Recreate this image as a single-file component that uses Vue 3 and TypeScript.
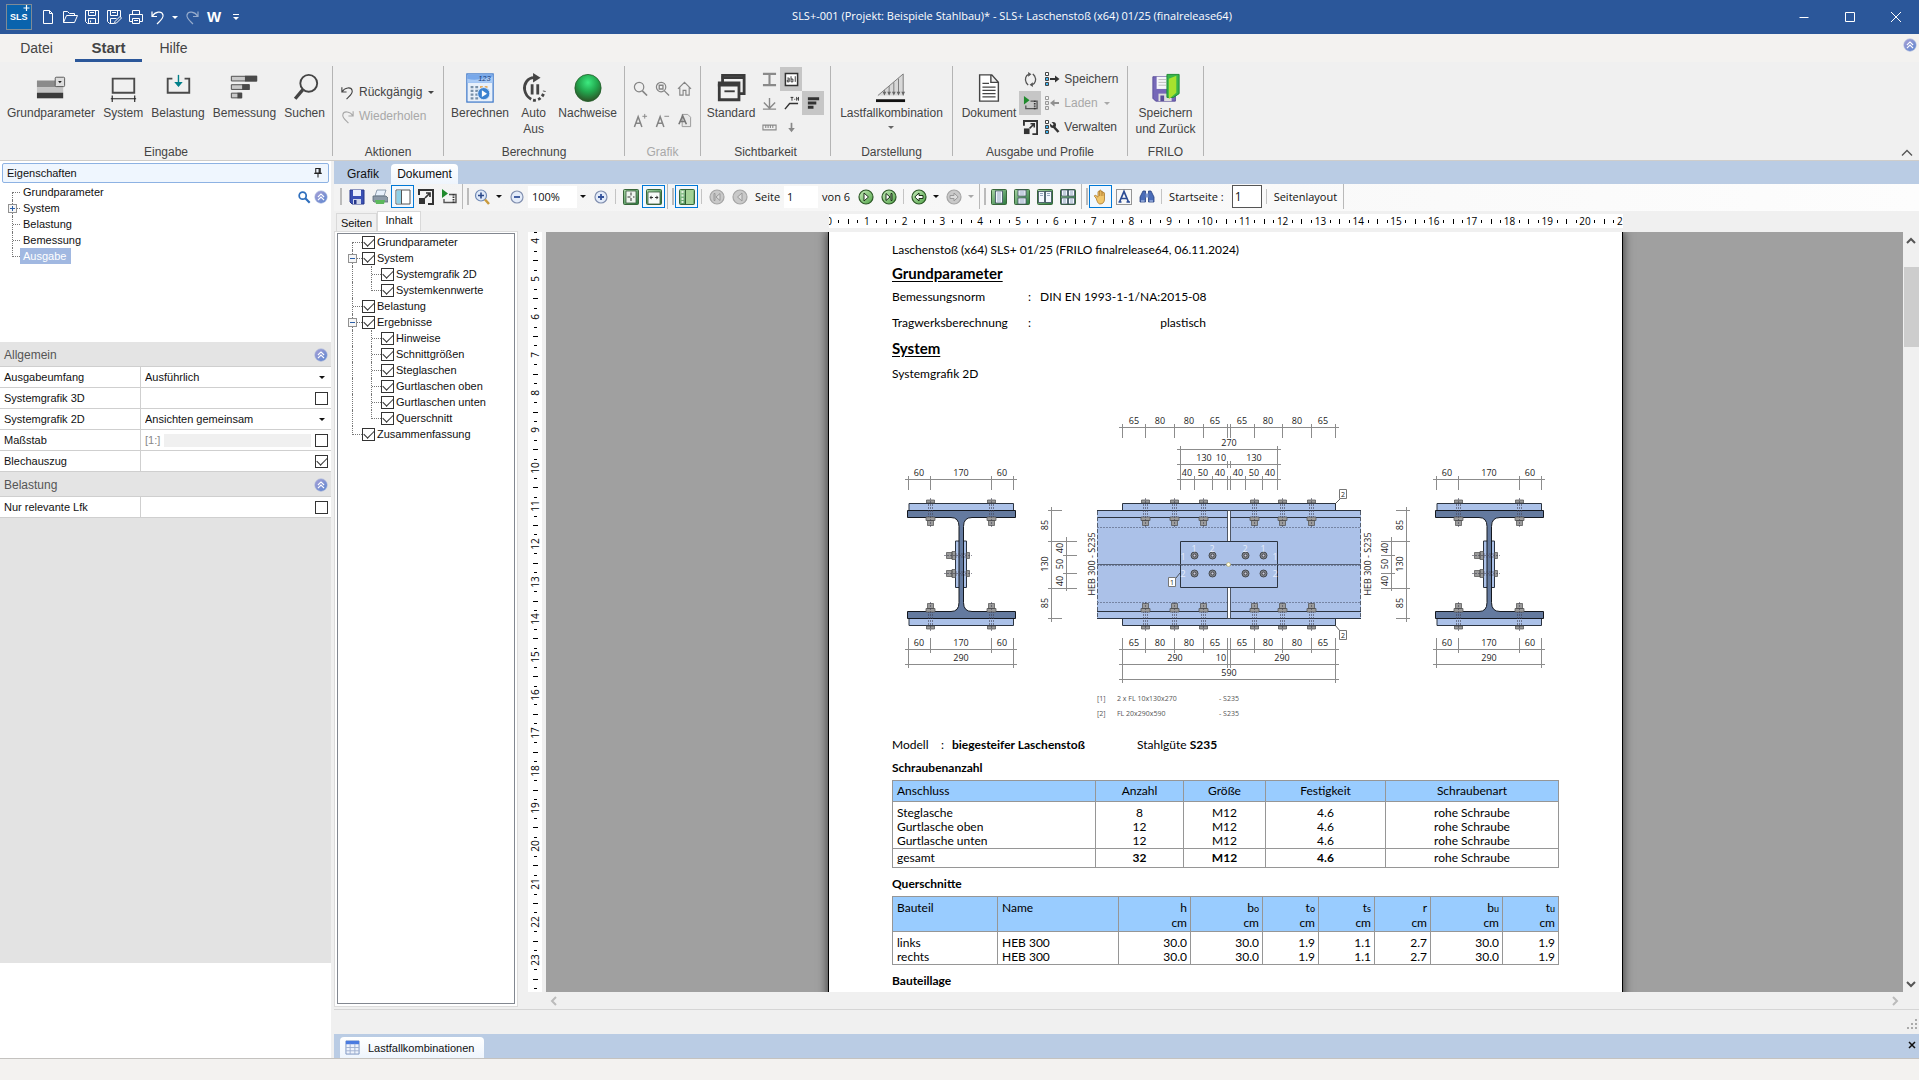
<script setup lang="ts">
import { ref } from 'vue'

interface TreeNode {
  label: string
  level: number
  last?: boolean
  expander?: boolean
  checked?: boolean
}

const chevrons =
  '<circle cx="8" cy="8" r="7" fill="url(#g-orb)" stroke="#8fa3d6" stroke-width=".7"/><path d="M4.5 8 8 4.5 11.5 8M4.5 11.5 8 8l3.5 3.5" fill="none" stroke="#fff" stroke-width="1.3"/>'
const full =
  '<path d="M1 6V1h14v14h-5" fill="none" stroke="#333" stroke-width="2"/><path d="M1 9h6v6H1z" fill="#333"/><path d="m7 9 5-5M8 4h4v4" fill="none" stroke="#333" stroke-width="1.7"/>'
const play =
  '<path d="M1 0v9l6-4.5z" fill="#1f8a2c"/><path d="M8 5.5h7v8H3V10" fill="none" stroke="#555" stroke-width="1.4"/><path d="M12.5 5v9" stroke="#333" stroke-width="1.8" stroke-dasharray="1.5 1"/>'
const undo = '<path d="M2 2.5v5h5M2.3 7.2C5 2.5 12 1.5 13 6c.8 3.2-2.5 5.5-6 9" fill="none" stroke="currentColor" stroke-width="1.2"/>'
const redo = '<path d="M14 2.5v5H9M13.7 7.2C11 2.5 4 1.5 3 6c-.8 3.2 2.5 5.5 6 9" fill="none" stroke="currentColor" stroke-width="1.2"/>'
const orb = (inner: string, grey = false): string =>
  `<circle cx="8" cy="8" r="7" fill="${grey ? '#c9c9c9' : 'url(#g-green)'}" stroke="${grey ? '#a5a5a5' : '#2e5a28'}" stroke-width="1.2"/><path d="${inner}" fill="${grey ? '#ddd' : '#fff'}" stroke="${grey ? '#999' : '#1c3018'}" stroke-width="1"/>`
const greenBox = (inner: string): string =>
  `<rect x=".5" y=".5" width="15" height="15" rx="1" fill="url(#g-box)" stroke="#38663a"/>${inner}`
const sheet = (x: number, y: number, w: number, h: number): string =>
  `<rect x="${x}" y="${y}" width="${w}" height="${h}" fill="#f4f8ff" stroke="#3d4f60" stroke-width=".8"/><path d="M${x + 1.5} ${y + 2}h${w - 3}M${x + 1.5} ${y + 4}h${w - 3}" stroke="#7d93b0" stroke-width=".8"/>`
const profile = '<path d="M1.5 1.5h3v3h-3z" fill="#fff" stroke="#444"/><path d="M1.5 6.5h3v3h-3zM1.5 11.5h3v3h-3z" fill="#3fb4f0" stroke="#444"/>'

const icons: Record<string, string> = {
  chevrons, full, play, undo, redo,
  fileNew: '<path d="M3.5 1.5h6l3 3v10h-9zM9.5 1.5v3h3" fill="none" stroke="#fff"/>',
  fileOpen: '<path d="M1.5 13.5v-11h4l2 2h5v2M1.5 13.5l3-7h11l-3 7z" fill="none" stroke="#fff"/>',
  fileSave: '<path d="M1.5 1.5h13v13h-11l-2-2zM4.5 1.5v5h7v-5M4.5 14.5v-5h7v5M6 3.5h4M6.5 11.5v2" fill="none" stroke="#fff"/>',
  fileSaveAs: '<path d="M8 14.5H3.5l-2-2v-11h13V8M4.5 1.5v5h7v-5M4.5 14.5v-5h6M6 3.5h4M8.5 14.5l.5-2 5-5 1.5 1.5-5 5z" fill="none" stroke="#fff"/>',
  filePrint: '<path d="M4.5 5.5v-4h7v4M4.5 12.5h-3v-7h13v7h-3M4.5 9.5h7v5h-7zM6 11.5h4" fill="none" stroke="#fff"/>',
  more: '<path d="M5 5.5h6" stroke="#fff"/><path d="m5 8 3 3 3-3z" fill="#fff"/>',
  params: '<path d="M1 8h28v7H1z" fill="#8b8b8b"/><path d="M1 15h28v6H1z" fill="#c4c4c4"/><path d="M1 21h28v6H1z" fill="#3b3b3b"/><rect x="20.5" y="4.5" width="10" height="10" rx="1" fill="#ddd" stroke="#555"/><path d="m23.5 8.5 2 2.5 2-2.5z" fill="#222"/>',
  system: '<path d="M5 6h23v15H5z" fill="none" stroke="#4a4a4a" stroke-width="2"/><path d="M3 27.5h27M4.5 24v7M28.5 24v7" stroke="#222" stroke-width="1.2"/>',
  load: '<path d="M10 6H5v15h23V6h-5" fill="none" stroke="#4a4a4a" stroke-width="2"/><path d="M16.5 2v12" stroke="#00808a" stroke-width="1.5"/><path d="M12 9.5h9l-4.5 5.5z" fill="#00808a"/>',
  design: '<path d="M2.5 3.5h27v5h-27zM2.5 12.5h19v5h-19zM2.5 21.5h11v5h-11z" fill="#c9c9c9" stroke="#4a4a4a"/><path d="M17 3h13v6H17zM14 12h8v6h-8zM9 21h5v6H9z" fill="#4a4a4a"/>',
  search: '<circle cx="20" cy="11" r="9" fill="none" stroke="#444" stroke-width="2"/><path d="m13.5 18-8 9.5" stroke="#444" stroke-width="3.5"/>',
  calc: '<rect x="2" y="1" width="28" height="30" fill="#e8f0fa" stroke="#3d78c9" stroke-width="1.3"/><path d="M2.5 1.5h27v9h-27z" fill="#78a8ea"/><path d="M2.5 6c10 3 18-1 27-2v6.5h-27z" fill="#a9caf5"/><text x="14" y="9" font-size="8" font-style="italic" font-family="Liberation Sans" fill="#163a78">123</text><path d="M6 15h3M11 15h3M6 19h3M11 19h3M6 23h3M11 23h3M6 27h3M11 27h3" stroke="#7890a8" stroke-width="2.5"/><path d="M16 15h3M21 15h3" stroke="#e5ad62" stroke-width="2.5"/><circle cx="20" cy="22" r="6.5" fill="#3b82d0" stroke="#d7e8fb"/><path d="M18 18.5v7l5.5-3.5z" fill="#fff"/>',
  auto: '<path d="M16 5C9 5 5 12 6 18s3.5 8 7 10" fill="none" stroke="#444" stroke-width="3"/><path d="M15 0v10l8-5z" fill="#444"/><path d="M14 12v11M20 12v11" stroke="#444" stroke-width="3"/><path d="M15 29c5 1 11-3 12-10" fill="none" stroke="#444" stroke-width="3" stroke-dasharray="3 2.5"/>',
  ball: '<ellipse cx="16" cy="16" rx="14" ry="14.5" fill="url(#g-ball)" stroke="#1c5a24" stroke-width=".8"/>',
  standard: '<path d="M7 10V2.5h23V22h-6" fill="none" stroke="#3b3b3b" stroke-width="3"/><path d="M3.5 10.5h21v18h-21z" fill="none" stroke="#3b3b3b" stroke-width="3"/><path d="M2 13h23M6 5h24" stroke="#3b3b3b" stroke-width="3"/><path d="M9 19.5h11" stroke="#3b3b3b" stroke-width="2"/>',
  lfk: '<path d="M2 24 29 1v23z" fill="#d8d8d8"/><path d="M2 24 29 1v23M24 6v16M19 10v12M14 14v9M9 18v5" fill="none" stroke="#777"/><path d="m22 20 2 4 2-4zM17 20l2 4 2-4zM12 20l2 4 2-4zM27 20l2 4 2-4zM7 20l2 4 2-4z" fill="#666"/><path d="M0 29.5h31" stroke="#111" stroke-width="3"/>',
  doc: '<path d="M6 2h13l7 8v20H6zM18 2v8h8" fill="#fff" stroke="#444" stroke-width="1.5"/><path d="M9 11h7M9 15h14M9 18.5h14M9 22h14M9 25.5h14" stroke="#444" stroke-width="1.2"/>',
  saveBack: '<path d="M2 4h24v26H5l-3-3z" fill="#7668b8" stroke="#5a4e99"/><path d="M6 4h12v13H6z" fill="#f5f5fa"/><path d="M8 7h8M8 10h8M8 13h8" stroke="#bbb"/><path d="M8 22h14v8H8z" fill="#ddd"/><path d="M10 24h4v6h-4z" fill="#5a4e99"/><path d="M17 1.5h13V22l-6 4h-7z" fill="#39b54a" stroke="#1d8a31"/><path d="m19 6 8-3v18l-8 7z" fill="#a6e22e"/>',
  gZoom: '<circle cx="6.5" cy="6.5" r="5" fill="none" stroke="#858585" stroke-width="1.3"/><path d="m10 10.5 5 5" stroke="#858585" stroke-width="1.7"/>',
  gFit: '<circle cx="6.5" cy="6.5" r="5" fill="none" stroke="#858585" stroke-width="1.3"/><path d="M4.5 4.5h4v4h-4zM10 10.5l5 5" fill="none" stroke="#858585" stroke-width="1.4"/>',
  gHome: '<path d="m1 8.5 7-7 7 7M3 7v8h3.5v-5h3v5H13V7" fill="none" stroke="#858585" stroke-width="1.2"/>',
  gPlus: '<path d="m1.5 15 4-11 4 11M3 11h5" fill="none" stroke="#858585" stroke-width="1.6"/><path d="M10 3.5h5M12.5 1v5" stroke="#858585"/>',
  gMinus: '<path d="m1.5 15 4-11 4 11M3 11h5" fill="none" stroke="#858585" stroke-width="1.6"/><path d="M10 3.5h5" stroke="#858585"/>',
  gPage: '<path d="M5.5 1.5h6l3 3v10h-9z" fill="#e8e8e8" stroke="#999"/><path d="m2 12 4-9 4 9M3.5 9h5" fill="none" stroke="#777" stroke-width="1.7"/>',
  beam: '<path d="M1 2h14M1 14h14M8 2v12" stroke="#8a8a8a" stroke-width="2.2"/>',
  abl: '<path d="M1.5 1.5h13v13h-13z" fill="#fff" stroke="#333" stroke-width="1.6"/><path d="M3.5 6.5h2v4h-2v-2h2M7.5 4.5v6h2v-3h-2M12 4.5v6" fill="none" stroke="#333"/>',
  axes: '<path d="M1 14h14M8 2v11M8 13 2 7M8 13l6-6" fill="none" stroke="#888" stroke-width="1.5"/>',
  label: '<path d="m1 14 5-6h9" fill="none" stroke="#333" stroke-width="1.5"/><path d="M7 1.5h3M8.5 1v4M11 3.5h1M13.500 1v4M15.5 1v4M13.5 3h2" stroke="#333" fill="none"/>',
  bars: '<path d="M2 3h12M2 7.5h9M2 12h6" stroke="#333" stroke-width="3.2"/>',
  scale: '<path d="M1 5.5h14v5H1zM4 5.5v3M6.5 5.5v3M9 5.5v3M11.5 5.5v3" fill="none" stroke="#8a8a8a" stroke-width="1.2"/>',
  down: '<path d="M8 3v8" stroke="#888" stroke-width="1.8"/><path d="M4.5 8.5h7L8 13z" fill="#888"/>',
  refresh: '<path d="M6 2.5C3 3.5 1.5 8 3.5 11.5l2 2.5M10 13.5c3-1 4.5-5.5 2.5-9l-2-2.5" fill="none" stroke="#555" stroke-width="1.4"/><path d="M5.5 0v5L9 2.5zM10.5 11v5L7 13.5z" fill="#555"/>',
  pSave: profile + '<path d="M6 8h6" stroke="#333" stroke-width="2"/><path d="M11 4.5v7L15.5 8z" fill="#333"/>',
  pLoad: '<g opacity=".5">' + profile.replace(/#3fb4f0/g, '#ddd') + '<path d="M9 8h6" stroke="#333" stroke-width="2"/><path d="M10.5 4.5v7L6 8z" fill="#333"/></g>',
  pTool: profile + '<path d="m9 7 5.5 6" stroke="#333" stroke-width="2.5"/><circle cx="9" cy="6" r="3" fill="#333"/><path d="m6 3 3 3" stroke="#f0f0f0" stroke-width="1.8"/>',
  tSave: '<path d="M1 1h14v14H3l-2-2z" fill="#3a50b4" stroke="#27378a"/><path d="M4 1h8v6H4z" fill="#e9eefc"/><path d="M4 10h8v5H4z" fill="#cfd6ea"/><path d="M5 11h2.5v4H5z" fill="#27378a"/>',
  tPrint: '<path d="M5 1h9l-2 6H3z" fill="#e7f0fb" stroke="#7a8a9c" stroke-width=".8"/><path d="M1 7h13l2 2v4H2l-1-1z" fill="#8d9aa8" stroke="#5c6976" stroke-width=".8"/><path d="M3 11h10l-1 4H4z" fill="#5cb85c"/>',
  tPanel: '<path d="M1 1h14v14H1z" fill="#fff" stroke="#555"/><path d="M1.5 1.5h5v13h-5z" fill="#8fd0e6"/><path d="M6.5 1v14" stroke="#555"/>',
  tZoomIn: '<circle cx="7" cy="6.5" r="5.5" fill="#dfe9f8" stroke="#6f89b5" stroke-width="1.2"/><path d="M4 6.5h6M7 3.5v6" stroke="#2c4a8a" stroke-width="1.6"/><path d="m11 10.5 4 4.5" stroke="#c99a3c" stroke-width="2.5"/>',
  tMinus: '<circle cx="8" cy="8" r="6" fill="#e3ebf9" stroke="#8290b0" stroke-width="1.2"/><path d="M5 8h6" stroke="#33529a" stroke-width="1.8"/>',
  tPlus: '<circle cx="8" cy="8" r="6" fill="#e3ebf9" stroke="#8290b0" stroke-width="1.2"/><path d="M5 8h6M8 5v6" stroke="#33529a" stroke-width="1.8"/>',
  tFit: greenBox('<path d="M3 2h10v12H3z" fill="#eef5ee" stroke="#3d5c3f" stroke-width=".8"/><path d="M8 3.500v9M4.500 8h7" stroke="#333" stroke-dasharray="3 2.500"/>'),
  tWidth: greenBox('<path d="M2 3h12v12H2z" fill="#f8faf8" stroke="#3d5c3f" stroke-width=".8"/><path d="M4 8.500h3M9 8.500h3" stroke="#333"/><path d="M5.500 6.500v4l-2-2zM10.500 6.500v4l2-2z" fill="#333"/>'),
  tThumbs: greenBox('<path d="M7 1v14h7.5V1z" fill="#a4d296"/><path d="M6.5 1v14" stroke="#2f5a31"/><path d="M2.5 3h2M2.5 6.5h2M2.5 10h2M2.5 13h2" stroke="#dff0da" stroke-width="1.8"/>'),
  first: orb('M11 4.5v7L7 8zM5 4.5h1v7H5z', true),
  prev: orb('M10 4v8L5.5 8z', true),
  next: orb('M6 4v8l4.5-4z'),
  last: orb('M5 4.5v7L9 8zM10 4.5h1v7h-1z'),
  back: orb('M8 4v2.5h4v3H8V12L3.8 8z'),
  fwd: orb('M8 4v2.5H4v3h4V12l4.200-4z', true),
  v1: greenBox(sheet(4.5, 2, 7, 12) + '<path d="M6 8h4M6 10h4M6 12h4" stroke="#7d93b0" stroke-width=".8"/>'),
  v2: greenBox(sheet(4, 1, 8, 6) + sheet(4, 9, 8, 6)),
  v3: greenBox(sheet(1.5, 2.5, 6, 11) + sheet(8.5, 2.5, 6, 11)),
  v4: greenBox(sheet(1.5, 1, 6, 6) + sheet(8.5, 1, 6, 6) + sheet(1.5, 9, 6, 6) + sheet(8.5, 9, 6, 6)),
  hand: '<path d="M3 9 1.5 7.5C1 6.5 2 6 3 6.5l2 1.7V3c0-1 1.5-1 1.5 0V1.800c0-1 1.7-1 1.7 0V3c0-1 1.6-1 1.6 0v1.2c0-1 1.7-1 1.7 0V10c0 3-1.5 5-4.5 5C5 15 4 12 3 9z" fill="#f1c66b" stroke="#a9762a" stroke-width=".8"/><path d="M6.5 3v4M8.2 3v4M9.9 3.5V7" stroke="#a9762a" stroke-width=".7"/>',
  textSel: '<path d="M.5.5h15v15H.5z" fill="none" stroke="#333" stroke-dasharray="1 1"/><path d="M3.5 13 8 2.5 12.5 13M5 9.5h6M2.5 13h3M10.5 13H14" fill="none" stroke="#2b4b94" stroke-width="1.7"/>',
  find: '<path d="M1 13V8l3-6h2.5v11zM9.5 13V2H12l3 6v5z" fill="#4a6cb8" stroke="#27407e" stroke-width=".8"/><path d="M6.5 4.5h3v4h-3z" fill="#7f9ad4"/><path d="M2 12h3.5M10.5 12H14" stroke="#c5d3f2"/>',
  pin: '<path d="M5 2h6v6H5zM9.5 2v6M3 8.5h10M8 8.5V14" fill="none" stroke="#222" stroke-width="1.4"/>',
  find2: '<circle cx="6.5" cy="6.5" r="4" fill="none" stroke="#2f6fbd" stroke-width="2"/><path d="m9.5 9.5 5 5" stroke="#2f6fbd" stroke-width="2.5"/>',
  grid: '<path d="M1 1h14v14H1z" fill="#eef3fc" stroke="#7a92c0"/><path d="M1 1h14v3.5H1z" fill="#4a7be0"/><path d="M1 8h14M1 11.5h14M5.5 4v11M10.5 4v11" stroke="#9fb0d0"/>',
}

const quick = ['fileNew', 'fileOpen', 'fileSave', 'fileSaveAs', 'filePrint']
const eingabe = [
  { icon: 'params', label: 'Grundparameter' },
  { icon: 'system', label: 'System' },
  { icon: 'load', label: 'Belastung' },
  { icon: 'design', label: 'Bemessung' },
  { icon: 'search', label: 'Suchen' },
]
const berechnung = [
  { icon: 'calc', label: 'Berechnen' },
  { icon: 'auto', label: 'Auto Aus' },
  { icon: 'ball', label: 'Nachweise' },
]
const grafik = ['gZoom', 'gFit', 'gHome', 'gPlus', 'gMinus', 'gPage']
const visibility = [
  { icon: 'beam' }, { icon: 'abl', on: true }, { icon: '' },
  { icon: 'axes' }, { icon: 'label' }, { icon: 'bars', on: true },
  { icon: 'scale' }, { icon: 'down' },
]
const output = [{ icon: 'refresh' }, { icon: 'play', on: true }, { icon: 'full' }]

const nav: TreeNode[] = [
  { label: 'Grundparameter', level: 0 },
  { label: 'System', level: 0, expander: true },
  { label: 'Belastung', level: 0 },
  { label: 'Bemessung', level: 0 },
  { label: 'Ausgabe', level: 0, last: true },
]
const selected = ref('Ausgabe')

const contents = ref<TreeNode[]>([
  { label: 'Grundparameter', level: 0, checked: true },
  { label: 'System', level: 0, expander: true, checked: true },
  { label: 'Systemgrafik 2D', level: 1, checked: true },
  { label: 'Systemkennwerte', level: 1, last: true, checked: true },
  { label: 'Belastung', level: 0, checked: true },
  { label: 'Ergebnisse', level: 0, expander: true, checked: true },
  { label: 'Hinweise', level: 1, checked: true },
  { label: 'Schnittgrößen', level: 1, checked: true },
  { label: 'Steglaschen', level: 1, checked: true },
  { label: 'Gurtlaschen oben', level: 1, checked: true },
  { label: 'Gurtlaschen unten', level: 1, checked: true },
  { label: 'Querschnitt', level: 1, last: true, checked: true },
  { label: 'Zusammenfassung', level: 0, last: true, checked: true },
])

const zoom = ref('100%')
const page = ref('1')
const startPage = ref('1')

/* Rulers: pixels per centimetre, one mark each quarter */
const CM = 37.8
const hTicks = Array.from({ length: 85 }, (_, i) => i)
const vTicks = Array.from({ length: 81 }, (_, i) => i)

const screws = [
  ['Steglasche', '8', 'M12', '4.6', 'rohe Schraube'],
  ['Gurtlasche oben', '12', 'M12', '4.6', 'rohe Schraube'],
  ['Gurtlasche unten', '12', 'M12', '4.6', 'rohe Schraube'],
]
const sectionHead = [
  ['h', ''], ['b', 'o'], ['t', 'o'], ['t', 's'], ['r', ''], ['b', 'u'], ['t', 'u'],
]
const sectionRows = [
  ['links', 'HEB 300', '30.0', '30.0', '1.9', '1.1', '2.7', '30.0', '1.9'],
  ['rechts', 'HEB 300', '30.0', '30.0', '1.9', '1.1', '2.7', '30.0', '1.9'],
]

/* Drawing: bolt axes and dimension chains */
const boltX = [1145, 1174, 1203, 1254, 1282, 1311]
const chainX = [1122, 1145, 1174, 1203, 1227, 1230, 1254, 1282, 1311, 1335]
const chainText = [
  [1134, '65'], [1160, '80'], [1189, '80'], [1215, '65'],
  [1242, '65'], [1268, '80'], [1297, '80'], [1323, '65'],
] as [number, string][]
const innerX = [1194, 1212, 1227, 1230, 1245, 1262]
const innerText = [
  [1187, '40'], [1203, '50'], [1220, '40'], [1238, '40'], [1254, '50'], [1270, '40'],
] as [number, string][]
const webBolts = [1194, 1212, 1245, 1263]
const webMarks = [
  [1194, 552, '1'], [1212, 552, '2'], [1245, 552, '2'], [1263, 552, '1'],
  [1183, 560, '1'], [1183, 577, '2'], [1275, 560, '1'], [1275, 577, '2'],
] as [number, number, string][]
</script>

<template>
  <div class="app">
    <svg class="defs" aria-hidden="true">
      <defs>
        <radialGradient id="g-ball" cx=".5" cy=".3" r=".7"><stop offset="0" stop-color="#3dea80" /><stop offset=".5" stop-color="#22a84e" /><stop offset="1" stop-color="#2c5226" /></radialGradient>
        <linearGradient id="g-orb" x2="1" y2="1"><stop offset="0" stop-color="#a9a0d6" /><stop offset="1" stop-color="#5b86d0" /></linearGradient>
        <linearGradient id="g-green" x2="1" y2="1"><stop offset="0" stop-color="#c9ecbc" /><stop offset="1" stop-color="#4fa346" /></linearGradient>
        <linearGradient id="g-box" x2="1" y2="1"><stop offset="0" stop-color="#a9d5a3" /><stop offset="1" stop-color="#2a7a3e" /></linearGradient>
      </defs>
    </svg>

    <header class="title">
      <svg class="logo" viewBox="0 0 26 26" aria-hidden="true">
        <rect x=".5" y=".5" width="25" height="25" fill="#0a63ad" stroke="#7f8b96" />
        <text x="4" y="16">SLS</text>
        <path d="M17.500 4h6M20.500 1v6" stroke="#fff" stroke-width="1.200" />
      </svg>
      <button v-for="q in quick" :key="q" class="q" :aria-label="q"><svg viewBox="0 0 16 16" v-html="icons[q]" /></button>
      <button class="q" aria-label="Rückgängig"><svg viewBox="0 0 16 16" v-html="icons.undo" /></button>
      <button class="q slim" aria-label="Liste"><i class="tri" /></button>
      <button class="q dim" aria-label="Wiederholen"><svg viewBox="0 0 16 16" v-html="icons.redo" /></button>
      <button class="q word">W</button>
      <button class="q" aria-label="Anpassen"><svg viewBox="0 0 16 16" v-html="icons.more" /></button>
      <h1>SLS+-001 (Projekt: Beispiele Stahlbau)* - SLS+ Laschenstoß (x64) 01/25 (finalrelease64)</h1>
      <div class="win">
        <button aria-label="Minimieren"><svg viewBox="0 0 12 12"><path d="M1.500 6.500h9" stroke="#fff" /></svg></button>
        <button aria-label="Maximieren"><svg viewBox="0 0 12 12"><path d="M1.500 1.500h9v9h-9z" fill="none" stroke="#fff" /></svg></button>
        <button aria-label="Schließen"><svg viewBox="0 0 12 12"><path d="m1 1 10 10M11 1 1 11" stroke="#fff" /></svg></button>
      </div>
    </header>

    <nav class="tabs">
      <button>Datei</button>
      <button class="active">Start</button>
      <button>Hilfe</button>
      <button class="help" aria-label="Hochklappen"><svg viewBox="0 0 16 16" v-html="icons.chevrons" /></button>
    </nav>

    <section class="ribbon">
      <div class="group g1">
        <div class="body">
          <button v-for="b in eingabe" :key="b.label" class="big"><svg viewBox="0 0 32 32" v-html="icons[b.icon]" /><span>{{ b.label }}</span></button>
        </div>
        <h2>Eingabe</h2>
      </div>
      <div class="group g2">
        <div class="body stack">
          <button class="row"><svg viewBox="0 0 16 16" v-html="icons.undo" />Rückgängig<i class="tri" /></button>
          <button class="row dis"><svg viewBox="0 0 16 16" v-html="icons.redo" />Wiederholen</button>
        </div>
        <h2>Aktionen</h2>
      </div>
      <div class="group g3">
        <div class="body">
          <button v-for="b in berechnung" :key="b.label" class="big" :class="b.icon"><svg viewBox="0 0 32 32" v-html="icons[b.icon]" /><span>{{ b.label }}</span></button>
        </div>
        <h2>Berechnung</h2>
      </div>
      <div class="group g4">
        <div class="body six">
          <button v-for="g in grafik" :key="g" :aria-label="g"><svg viewBox="0 0 16 16" v-html="icons[g]" /></button>
        </div>
        <h2 class="dis">Grafik</h2>
      </div>
      <div class="group g5">
        <div class="body">
          <button class="big"><svg viewBox="0 0 32 32" v-html="icons.standard" /><span>Standard</span></button>
          <div class="small three">
            <button v-for="(s, i) in visibility" :key="i" :class="{ on: s.on }" :aria-label="s.icon"><svg v-if="s.icon" viewBox="0 0 16 16" v-html="icons[s.icon]" /></button>
          </div>
        </div>
        <h2>Sichtbarkeit</h2>
      </div>
      <div class="group g6">
        <div class="body">
          <button class="big"><svg viewBox="0 0 32 32" v-html="icons.lfk" /><span>Lastfallkombination</span><i class="tri" /></button>
        </div>
        <h2>Darstellung</h2>
      </div>
      <div class="group g7">
        <div class="body">
          <button class="big"><svg viewBox="0 0 32 32" v-html="icons.doc" /><span>Dokument</span></button>
          <div class="small">
            <button v-for="s in output" :key="s.icon" :class="{ on: s.on }" :aria-label="s.icon"><svg viewBox="0 0 16 16" v-html="icons[s.icon]" /></button>
          </div>
          <div class="small rows">
            <button class="row"><svg viewBox="0 0 16 16" v-html="icons.pSave" />Speichern</button>
            <button class="row dis"><svg viewBox="0 0 16 16" v-html="icons.pLoad" />Laden<i class="tri" /></button>
            <button class="row"><svg viewBox="0 0 16 16" v-html="icons.pTool" />Verwalten</button>
          </div>
        </div>
        <h2>Ausgabe und Profile</h2>
      </div>
      <div class="group g8">
        <div class="body">
          <button class="big back"><svg viewBox="0 0 32 32" v-html="icons.saveBack" /><span>Speichern<br />und Zurück</span></button>
        </div>
        <h2>FRILO</h2>
      </div>
      <button class="fold" aria-label="Menüband einklappen"><svg viewBox="0 0 12 8"><path d="m1 6.500 5-5 5 5" fill="none" stroke="#555" stroke-width="1.300" /></svg></button>
    </section>

    <main>
      <aside class="props">
        <h2 class="caption">Eigenschaften<svg viewBox="0 0 16 16" v-html="icons.pin" /></h2>
        <div class="nav">
          <ul class="tree">
            <li v-for="(n, i) in nav" :key="n.label">
              <span class="stem" :class="{ first: i === 0, last: n.last }" />
              <button v-if="n.expander" class="exp plus" aria-label="Aufklappen" />
              <button class="node" :class="{ sel: selected === n.label }" @click="selected = n.label">{{ n.label }}</button>
            </li>
          </ul>
          <div class="tools">
            <button aria-label="Suchen"><svg viewBox="0 0 16 16" v-html="icons.find2" /></button>
            <button aria-label="Einklappen"><svg viewBox="0 0 16 16" v-html="icons.chevrons" /></button>
          </div>
        </div>
        <h3>Allgemein<svg viewBox="0 0 16 16" v-html="icons.chevrons" /></h3>
        <div class="prop"><label for="p1">Ausgabeumfang</label><div><select id="p1"><option>Ausführlich</option></select><i class="tri" /></div></div>
        <div class="prop"><label for="p2">Systemgrafik 3D</label><div><input id="p2" type="checkbox" /></div></div>
        <div class="prop"><label for="p3">Systemgrafik 2D</label><div><select id="p3"><option>Ansichten gemeinsam</option></select><i class="tri" /></div></div>
        <div class="prop"><label for="p4">Maßstab</label><div><span class="ratio">[1:]</span><span class="blank" /><input id="p4" type="checkbox" /></div></div>
        <div class="prop"><label for="p5">Blechauszug</label><div><input id="p5" type="checkbox" checked /></div></div>
        <h3>Belastung<svg viewBox="0 0 16 16" v-html="icons.chevrons" /></h3>
        <div class="prop"><label for="p6">Nur relevante Lfk</label><div><input id="p6" type="checkbox" /></div></div>
        <div class="fill" />
        <div class="hint" />
      </aside>

      <section class="work">
        <div class="strip">
          <button>Grafik</button>
          <button class="active">Dokument</button>
        </div>

        <div class="toolbar">
          <div class="tb t1">
            <button aria-label="Speichern"><svg viewBox="0 0 16 16" v-html="icons.tSave" /></button>
            <button aria-label="Drucken"><svg viewBox="0 0 16 16" v-html="icons.tPrint" /></button>
            <button class="on" aria-label="Seitenleiste"><svg viewBox="0 0 16 16" v-html="icons.tPanel" /></button>
            <button aria-label="Vollbild"><svg viewBox="0 0 16 16" v-html="icons.full" /></button>
            <button aria-label="Wiedergabe"><svg viewBox="0 0 16 16" v-html="icons.play" /></button>
          </div>
          <div class="tb">
            <button aria-label="Vergrößern"><svg viewBox="0 0 16 16" v-html="icons.tZoomIn" /></button>
            <button class="arrow" aria-label="Zoomliste"><i class="tri" /></button>
            <button aria-label="Verkleinern"><svg viewBox="0 0 16 16" v-html="icons.tMinus" /></button>
            <input v-model="zoom" class="zoom" aria-label="Zoom" />
            <button class="arrow" aria-label="Zoomstufe"><i class="tri" /></button>
            <button aria-label="Größer"><svg viewBox="0 0 16 16" v-html="icons.tPlus" /></button>
            <i class="sep" />
            <button aria-label="Ganze Seite"><svg viewBox="0 0 16 16" v-html="icons.tFit" /></button>
            <button class="on" aria-label="Seitenbreite"><svg viewBox="0 0 16 16" v-html="icons.tWidth" /></button>
          </div>
          <div class="tb">
            <button class="on" aria-label="Miniaturen"><svg viewBox="0 0 16 16" v-html="icons.tThumbs" /></button>
            <i class="sep" />
            <button aria-label="Erste"><svg viewBox="0 0 16 16" v-html="icons.first" /></button>
            <button aria-label="Vorige"><svg viewBox="0 0 16 16" v-html="icons.prev" /></button>
            <label for="page" class="txt">Seite</label>
            <input id="page" v-model="page" class="page-no" />
            <span class="txt">von 6</span>
            <button aria-label="Nächste"><svg viewBox="0 0 16 16" v-html="icons.next" /></button>
            <button aria-label="Letzte"><svg viewBox="0 0 16 16" v-html="icons.last" /></button>
            <i class="sep" />
            <button aria-label="Zurück"><svg viewBox="0 0 16 16" v-html="icons.back" /></button>
            <button class="arrow" aria-label="Verlauf"><i class="tri" /></button>
            <button aria-label="Vor"><svg viewBox="0 0 16 16" v-html="icons.fwd" /></button>
            <button class="arrow dis" aria-label="Verlauf vor"><i class="tri" /></button>
          </div>
          <div class="tb">
            <button v-for="v in ['v1', 'v2', 'v3', 'v4']" :key="v" :aria-label="v"><svg viewBox="0 0 16 16" v-html="icons[v]" /></button>
          </div>
          <div class="tb">
            <button class="on" aria-label="Hand"><svg viewBox="0 0 16 16" v-html="icons.hand" /></button>
            <button aria-label="Textauswahl"><svg viewBox="0 0 16 16" v-html="icons.textSel" /></button>
            <button aria-label="Suchen"><svg viewBox="0 0 16 16" v-html="icons.find" /></button>
            <i class="sep" />
            <label for="start" class="txt">Startseite :</label>
            <input id="start" v-model="startPage" class="start-no" />
            <i class="sep" />
            <button class="txt">Seitenlayout</button>
          </div>
        </div>

        <div class="content">
          <aside class="outline">
            <div class="otabs"><button>Seiten</button><button class="active">Inhalt</button></div>
            <div class="opage">
              <ul class="tree">
                <li v-for="(n, i) in contents" :key="n.label">
                  <span v-if="n.level" class="stem guide" />
                  <span class="stem" :class="{ first: i === 0, last: n.last }" />
                  <button v-if="n.expander" class="exp" aria-label="Zuklappen" />
                  <label><input v-model="n.checked" type="checkbox" />{{ n.label }}</label>
                </li>
              </ul>
            </div>
          </aside>

          <div class="viewer">
            <svg class="hruler" width="794" height="14">
              <template v-for="i in hTicks" :key="i">
                <text v-if="i % 4 === 0" :x="(i * CM) / 4" y="11">{{ i / 4 }}</text>
                <rect v-else :x="Math.round((i * CM) / 4)" :y="i % 4 === 2 ? 5 : 6" width="1" :height="i % 4 === 2 ? 5 : 3" />
              </template>
            </svg>
            <svg class="vruler" width="14">
              <template v-for="i in vTicks" :key="i">
                <text v-if="i % 4 === 1" :transform="`translate(11 ${Math.round((i * CM) / 4)}) rotate(-90)`">{{ (i + 15) / 4 }}</text>
                <rect v-else :y="Math.round((i * CM) / 4)" :x="i % 4 === 3 ? 5 : 6" height="1" :width="i % 4 === 3 ? 5 : 3" />
              </template>
            </svg>
            <div class="doc">
              <article class="page">
                <p>Laschenstoß (x64) SLS+ 01/25 (FRILO finalrelease64, 06.11.2024)</p>
                <h4>Grundparameter</h4>
                <dl class="kv">
                  <dt>Bemessungsnorm</dt><dd>:</dd><dd class="val">DIN EN 1993-1-1/NA:2015-08</dd>
                  <dt>Tragwerksberechnung</dt><dd>:</dd><dd class="val">plastisch</dd>
                </dl>
                <h4 class="sys">System</h4>
                <p class="sub">Systemgrafik 2D</p>

                <svg class="draw" width="666" height="320" viewBox="892 400 666 320">
                  <defs>
                    <g id="bolt">
                      <path d="M-4 500h8v3h-8zM-4.500 517h9v3.500h-9zM-3 520.500h6v5h-6z" fill="#9b9b9b" stroke="#4c4c4c" stroke-width=".7" />
                      <path d="M-2 504v13M2 504v13M0 498v30" stroke="#445" stroke-width=".6" stroke-dasharray="2 1" />
                    </g>
                    <g id="cross">
                      <path class="lt" d="M909 503.500h104.500v7H909zM909 618.500h104.500v7H909zM955.500 541h4v46.500h-4zM963.500 541h3v46.500h-3z" />
                      <path class="dk" d="M907.500 510.500h108v7h-43.500q-8.500 0-8.500 9v76q0 9 8.500 9h43.500v7h-108v-7h43.500q8 0 8-9v-76q0-9-8-9h-43.500z" />
                      <use href="#bolt" x="930.500" /><use href="#bolt" x="991.500" />
                      <g transform="translate(0 1129) scale(1 -1)"><use href="#bolt" x="930.500" /><use href="#bolt" x="991.500" /></g>
                      <g v-for="y in [555.5, 573.5]" :key="y">
                        <path :transform="`translate(0 ${y})`" d="M966.500-3h3v6h-3zM952-4h3.500v8H952zM946.500-3h5.500v6h-5.500z" fill="#9b9b9b" stroke="#4c4c4c" stroke-width=".7" />
                        <path :d="`M955 ${y - 1.5}h11M955 ${y + 1.5}h11M944 ${y}h28`" stroke="#445" stroke-width=".6" stroke-dasharray="2 1" />
                      </g>
                      <path class="dim" d="M905 479.500h112M908.500 476v14M930.500 476v14M991.500 476v14M1013.500 476v14M905 649.500h112M905 664.500h112M908.500 638v30M1013.500 638v30M930.500 638v15M991.500 638v15" />
                      <g class="num">
                        <text x="919" y="476">60</text><text x="961" y="476">170</text><text x="1002" y="476">60</text>
                        <text x="919" y="646">60</text><text x="961" y="646">170</text><text x="1002" y="646">60</text>
                        <text x="961" y="661">290</text>
                      </g>
                    </g>
                  </defs>

                  <use href="#cross" />
                  <use href="#cross" x="528" />

                  <path class="fill-lt" d="M1097 510.500h264v108h-264z" />
                  <path class="lt" d="M1122.500 503.500h213v7h-213zM1122.500 618.500h213v7h-213z" />
                  <path class="edge" d="M1097 510.500h264M1097 517.500h264M1097 611.500h264M1097 618.500h264" />
                  <path class="dash" d="M1097.500 511v108M1360.500 511v108" />
                  <path class="dash thin" d="M1097 527.500h264M1097 602.500h264M1097 565.500h264" />
                  <path d="M1227.500 510.500h3v108h-3z" fill="#fff" stroke="#2c3440" stroke-width=".8" />
                  <path class="lt" d="M1180.500 541.500h97v46h-97z" />
                  <path class="dash thin" d="M1181 565.500h96" />
                  <path class="axis" d="M1097 564.500h264" />
                  <use v-for="x in boltX" :key="x" href="#bolt" :x="x + 0.5" />
                  <g transform="translate(0 1129) scale(1 -1)"><use v-for="x in boltX" :key="x" href="#bolt" :x="x + 0.5" /></g>
                  <template v-for="x in webBolts" :key="x">
                    <g v-for="y in [555.5, 573.5]" :key="y" :transform="`translate(${x + 0.5} ${y})`">
                      <circle r="3.500" fill="#858990" stroke="#44484e" />
                      <circle r="1.500" fill="#ccd" stroke="#333" stroke-width=".8" />
                    </g>
                  </template>
                  <circle cx="1228.500" cy="564.500" r="2" fill="#fffde0" stroke="#b5aa66" stroke-width=".6" />
                  <g class="num mark"><text v-for="(m, i) in webMarks" :key="i" :x="m[0]" :y="m[1]">{{ m[2] }}</text></g>

                  <path class="dim" d="M1119 427.500h220M1177 449.500h104M1177 464.500h104M1177 479.500h104M1180.500 446v44M1277.500 446v44M1227.500 461v7M1230.500 461v7" />
                  <path v-for="x in chainX" :key="x" class="dim" :d="`M${x}.5 424v14M${x}.5 638v15`" />
                  <path v-for="x in innerX" :key="x" class="dim" :d="`M${x}.5 476v14`" />
                  <path class="dim" d="M1119 649.500h220M1119 664.500h220M1119 679.500h220M1122.500 653v30M1335.500 653v30M1227.500 653v15M1230.500 653v15" />
                  <g class="num">
                    <template v-for="t in chainText" :key="t[0]"><text :x="t[0]" y="424">{{ t[1] }}</text><text :x="t[0]" y="646">{{ t[1] }}</text></template>
                    <text v-for="t in innerText" :key="t[0]" :x="t[0]" y="476">{{ t[1] }}</text>
                    <text x="1229" y="446">270</text><text x="1204" y="461">130</text><text x="1221" y="461">10</text><text x="1254" y="461">130</text>
                    <text x="1175" y="661">290</text><text x="1221" y="661">10</text><text x="1282" y="661">290</text><text x="1229" y="676">590</text>
                  </g>

                  <path class="dim" d="M1051.500 507v115M1048 510.500h14M1048 618.500h14M1048 541.500h29M1048 588.500h29M1066.500 537v54M1063 555.500h14M1063 573.500h14" />
                  <path class="dim" d="M1406.500 507v115M1396 510.500h14M1396 618.500h14M1381 541.500h29M1381 588.500h29M1391.500 537v54M1381 555.500h14M1381 573.500h14" />
                  <g class="num">
                    <template v-for="x in [1048, 1403]" :key="x">
                      <text :transform="`translate(${x} 525) rotate(-90)`">85</text>
                      <text :transform="`translate(${x} 564) rotate(-90)`">130</text>
                      <text :transform="`translate(${x} 603) rotate(-90)`">85</text>
                    </template>
                    <template v-for="x in [1063, 1388]" :key="x">
                      <text :transform="`translate(${x} 548) rotate(-90)`">40</text>
                      <text :transform="`translate(${x} 564) rotate(-90)`">50</text>
                      <text :transform="`translate(${x} 581) rotate(-90)`">40</text>
                    </template>
                    <text transform="translate(1095 564) rotate(-90)">HEB 300 - S235</text>
                    <text transform="translate(1371 564) rotate(-90)">HEB 300 - S235</text>
                  </g>

                  <path d="m1340 499-5 5M1340 631l-5-6M1176 578l4-5" stroke="#333" stroke-width=".8" />
                  <path d="M1339.500 489.500h7v9h-7zM1339.500 630.500h7v9h-7zM1168.500 577.500h7v9h-7z" fill="#fff" stroke="#777" />
                  <g class="num tag"><text x="1343" y="497">2</text><text x="1343" y="638">2</text><text x="1172" y="585">1</text></g>
                  <g class="legend">
                    <text x="1097" y="701">[1]</text><text x="1117" y="701">2 x FL 10x130x270</text><text x="1219" y="701">- S235</text>
                    <text x="1097" y="716">[2]</text><text x="1117" y="716">FL 20x290x590</text><text x="1219" y="716">- S235</text>
                  </g>
                </svg>

                <p class="model"><span>Modell</span><span>:</span><b>biegesteifer Laschenstoß</b><span>Stahlgüte <b>S235</b></span></p>
                <h5>Schraubenanzahl</h5>
                <table class="screws">
                  <colgroup><col class="c-a" /><col class="c-b" /><col class="c-c" /><col class="c-d" /><col /></colgroup>
                  <thead><tr><th>Anschluss</th><th>Anzahl</th><th>Größe</th><th>Festigkeit</th><th>Schraubenart</th></tr></thead>
                  <tbody><tr v-for="r in screws" :key="r[0]"><td v-for="(c, i) in r" :key="i">{{ c }}</td></tr></tbody>
                  <tfoot><tr><td>gesamt</td><td><b>32</b></td><td><b>M12</b></td><td><b>4.6</b></td><td>rohe Schraube</td></tr></tfoot>
                </table>
                <h5 class="q2">Querschnitte</h5>
                <table class="sections">
                  <colgroup><col class="s-a" /><col class="s-b" /><col class="s-c" /><col class="s-c" /><col class="s-d" /><col class="s-d" /><col class="s-d" /><col class="s-c" /><col /></colgroup>
                  <thead><tr><th>Bauteil</th><th>Name</th><th v-for="(h, i) in sectionHead" :key="i">{{ h[0] }}<small>{{ h[1] }}</small><br />cm</th></tr></thead>
                  <tbody><tr v-for="r in sectionRows" :key="r[0]"><td v-for="(c, i) in r" :key="i">{{ c }}</td></tr></tbody>
                </table>
                <h5 class="q2">Bauteillage</h5>
              </article>
            </div>
            <div class="vscroll">
              <button aria-label="Nach oben"><svg viewBox="0 0 10 8"><path d="m1 6 4-4 4 4" fill="none" stroke="#555" stroke-width="2" /></svg></button>
              <i class="thumb" />
              <button aria-label="Nach unten"><svg viewBox="0 0 10 8"><path d="m1 2 4 4 4-4" fill="none" stroke="#555" stroke-width="2" /></svg></button>
            </div>
            <div class="hscroll">
              <button aria-label="Nach links"><svg viewBox="0 0 8 10"><path d="M6 1 2 5l4 4" fill="none" stroke="#bbb" stroke-width="2" /></svg></button>
              <button aria-label="Nach rechts"><svg viewBox="0 0 8 10"><path d="m2 1 4 4-4 4" fill="none" stroke="#bbb" stroke-width="2" /></svg></button>
            </div>
          </div>
        </div>

        <div class="status-in">
          <svg viewBox="0 0 12 12"><path d="M9 2h2M5 6h2M9 6h2M1 10h2M5 10h2M9 10h2" stroke="#aaa" stroke-width="2" /></svg>
        </div>
        <div class="bottom">
          <button class="btab"><svg viewBox="0 0 16 16" v-html="icons.grid" />Lastfallkombinationen</button>
          <button class="close" aria-label="Schließen"><svg viewBox="0 0 8 8"><path d="m1 1 6 6M7 1 1 7" stroke="#111" stroke-width="1.500" /></svg></button>
        </div>
      </section>
    </main>
    <footer />
  </div>
</template>

<style>
body {
  margin: 0;
}
</style>

<style scoped>
* {
  box-sizing: border-box;
}
.app {
  display: flex;
  flex-direction: column;
  height: 100vh;
  overflow: hidden;
  background: #f0f0f0;
  color: #111;
  font: 11px/16px 'Liberation Sans', sans-serif;
}
.defs {
  position: absolute;
  width: 0;
  height: 0;
}
button {
  display: flex;
  align-items: center;
  justify-content: center;
  margin: 0;
  padding: 0;
  border: 0;
  background: none;
  color: inherit;
  font: inherit;
}
h1, h2, h3, h4, h5, p, ul, dl, dd {
  margin: 0;
  padding: 0;
  font-weight: 400;
}
input, select {
  margin: 0;
  border: 0;
  border-radius: 0;
  font: inherit;
  color: inherit;
}
.tri {
  width: 0;
  height: 0;
  border: 3px solid transparent;
  border-top: 3px solid currentColor;
  border-bottom: 0;
}

/* title bar */
.title {
  position: relative;
  display: flex;
  align-items: center;
  flex: 0 0 34px;
  padding-left: 6px;
  background: #2b579a;
  color: #fff;
}
.logo {
  width: 26px;
  height: 26px;
  margin-right: 5px;
  fill: #fff;
  font-size: 9px;
  font-weight: 700;
}
.q {
  width: 22px;
  height: 26px;
}
.q svg {
  width: 16px;
  height: 16px;
}
.q.slim {
  width: 12px;
}
.q.dim {
  opacity: .5;
}
.q.word {
  font-size: 15px;
  font-weight: 700;
}
.title h1 {
  position: absolute;
  left: 0;
  right: 0;
  top: 8px;
  padding-left: 105px;
  text-align: center;
  font: 11px/16px 'Open Sans', sans-serif;
  pointer-events: none;
}
.win {
  display: flex;
  margin-left: auto;
}
.win button {
  width: 46px;
  height: 34px;
}
.win svg {
  width: 12px;
  height: 12px;
}

/* ribbon tabs */
.tabs {
  display: flex;
  flex: 0 0 28px;
  padding-left: 8px;
  background: #f3f2f0;
  color: #444;
  font-size: 14px;
}
.tabs button {
  width: 57px;
}
.tabs .active {
  width: 67px;
  margin: 0 3px 0 10px;
  border-top: 3px solid transparent;
  border-bottom: 3px solid #2b579a;
  font-size: 15px;
  font-weight: 700;
}
.tabs .help {
  width: 16px;
  margin: 0 1px 6px auto;
}
.help svg {
  width: 14px;
}

/* ribbon */
.ribbon {
  position: relative;
  display: flex;
  flex: 0 0 99px;
  border-bottom: 1px solid #cfcdca;
  background: #f0f0f0;
  color: #444;
  font-size: 12px;
}
.group {
  display: flex;
  flex-direction: column;
  margin: 4px 0;
  border-right: 1px solid #b4b4b4;
}
.g1 { width: 333px; }
.g2 { width: 111px; }
.g3 { width: 181px; }
.g4 { width: 76px; }
.g5 { width: 130px; }
.g6 { width: 122px; }
.g7 { width: 175px; }
.g8 { width: 76px; }
.group .body {
  display: flex;
  gap: 7px;
  flex: 1;
  padding: 0 7px;
  justify-content: center;
}
.group.g1 .body {
  justify-content: space-between;
}
.group h2 {
  height: 8px;
  font-size: 12px;
  line-height: 8px;
  text-align: center;
}
.dis {
  color: #a8a8a8;
}
.big {
  flex-direction: column;
  justify-content: flex-start;
  align-items: center;
  padding-top: 6px;
}
.big svg {
  width: 30px;
  height: 32px;
  margin-bottom: 1px;
}
.big span {
  line-height: 16px;
}
.big.auto {
  width: 36px;
}
.big .tri {
  margin-top: 5px;
  border-top-color: #666;
}
.group .stack {
  flex-direction: column;
  justify-content: flex-start;
  gap: 8px;
  padding-top: 18px;
}
.row {
  justify-content: flex-start;
  gap: 4px;
  white-space: nowrap;
}
.row svg {
  width: 16px;
  height: 16px;
}
.stack .row {
  height: 16px;
}
.stack .row svg {
  width: 15px;
  height: 15px;
}
.row .tri {
  margin-left: 2px;
}
.group .six {
  display: grid;
  grid-template-columns: repeat(3, 22px);
  grid-template-rows: 32px 32px;
  gap: 0;
  padding-top: 6px;
}
.six svg {
  width: 15px;
  height: 15px;
}
.g5 .body {
  gap: 3px;
  padding: 0 3px;
}
.small {
  display: grid;
  grid-template-rows: repeat(3, 24px);
  padding-top: 1px;
}
.small.three {
  grid-template-columns: repeat(3, 22px);
}
.small:not(.rows) svg {
  width: 15px;
  height: 15px;
}
.g7 .small:not(.rows) {
  grid-template-columns: 22px;
}
.small .on {
  background: #c6c6c6;
}
.g7 .body {
  gap: 3px;
}
.fold {
  position: absolute;
  right: 6px;
  bottom: 3px;
}
.fold svg {
  width: 12px;
  height: 8px;
}

/* main frame */
main {
  display: grid;
  grid-template-columns: 331px minmax(0, 1fr);
  grid-template-rows: minmax(0, 1fr);
  column-gap: 3px;
  flex: 1;
  min-height: 0;
}
.props {
  display: flex;
  flex-direction: column;
  background: #fff;
}
.caption {
  display: flex;
  align-items: center;
  justify-content: space-between;
  flex: 0 0 20px;
  margin: 2px 2px 0;
  padding: 0 4px;
  border: 1px solid #8db2e3;
  border-radius: 2px;
  background: #eff6fe;
  font-size: 11px;
}
.caption svg {
  width: 12px;
  height: 12px;
}
.nav {
  display: flex;
  justify-content: space-between;
  align-items: flex-start;
  flex: 0 0 159px;
  padding: 1px 3px 0 12px;
}
.nav .tools {
  display: flex;
  gap: 3px;
  padding-top: 6px;
}
.tools svg {
  width: 14px;
  height: 14px;
}
.tree {
  list-style: none;
}
.tree li {
  position: relative;
  display: flex;
  height: 16px;
}
.stem {
  position: relative;
  width: 10px;
  border-left: 1px dotted #777;
}
.stem::after {
  content: '';
  position: absolute;
  left: 0;
  right: 0;
  top: 8px;
  border-top: 1px dotted #777;
}
.stem.first {
  margin-top: 8px;
}
.stem.first::after {
  top: 0;
}
.stem.last {
  height: 9px;
}
.stem.guide {
  width: 19px;
}
.stem.guide::after {
  display: none;
}
.exp {
  position: absolute;
  left: -4px;
  top: 4px;
  width: 9px;
  height: 9px;
  border: 1px solid #919191;
  background: linear-gradient(#2b5fa8, #2b5fa8) center / 5px 1px no-repeat #f6f6f6;
}
.exp.plus {
  background: linear-gradient(#2b5fa8, #2b5fa8) center / 5px 1px no-repeat, linear-gradient(#2b5fa8, #2b5fa8) center / 1px 5px no-repeat #f6f6f6;
}
.nav .tree .stem {
  width: 8px;
}
.node {
  height: 16px;
  padding: 0 5px 0 3px;
}
.node.sel {
  background: #a1b8e1;
  color: #fff;
}
.props h3 {
  display: flex;
  align-items: center;
  justify-content: space-between;
  flex: 0 0 25px;
  padding: 1px 3px 0 4px;
  border-bottom: 1px solid #cfcfcf;
  background: #e4e4e4;
  color: #555;
  font-size: 12px;
}
.props h3 svg {
  width: 14px;
  height: 14px;
}
.prop {
  display: grid;
  grid-template-columns: 141px 1fr;
  flex: 0 0 21px;
  border-bottom: 1px solid #cfcfcf;
}
.prop label {
  padding: 2px 4px;
  border-right: 1px solid #cfcfcf;
}
.prop div {
  position: relative;
  display: flex;
  align-items: center;
  justify-content: flex-end;
  padding: 0 3px 0 4px;
}
.prop select {
  flex: 1;
  height: 18px;
  appearance: none;
  background: #fff;
  padding: 0;
}
.prop div .tri {
  margin-right: 3px;
}
.ratio {
  color: #888;
}
.blank {
  flex: 1;
  height: 13px;
  margin: 0 4px;
  background: #f0f0f0;
}
input[type='checkbox'] {
  position: relative;
  appearance: none;
  width: 13px;
  height: 13px;
  border: 1px solid #333;
  background: #fff;
}
input[type='checkbox']:checked::after {
  content: '';
  position: absolute;
  left: 1px;
  top: 1px;
  width: 9px;
  height: 5px;
  border: solid #333;
  border-width: 0 0 1px 1px;
  transform: rotate(-45deg);
}
.fill {
  flex: 1;
  background: #e3e3e3;
}
.hint {
  flex: 0 0 95px;
}

/* work area */
.work {
  display: flex;
  flex-direction: column;
  min-width: 0;
  min-height: 0;
}
.strip {
  display: flex;
  flex: 0 0 23px;
  padding: 3px 0 0 1px;
  background: #bacce4;
}
.strip button {
  width: 56px;
  font-size: 12px;
}
.strip .active {
  width: 67px;
  border-radius: 4px 4px 0 0;
  background: linear-gradient(#fff, #eef5fd);
}
.toolbar {
  display: flex;
  align-items: stretch;
  flex: 0 0 27px;
  padding: 0 0 2px 5px;
  background: linear-gradient(90deg, #f3f3f3, #fdfdfd);
  font: 12px/16px 'Open Sans', sans-serif;
}
.tb {
  display: flex;
  align-items: center;
  padding: 0 2px 0 4px;
  border-right: 1px solid #b9b9b9;
  background: linear-gradient(90deg, transparent 1px, #bbb 1px, #bbb 3px, transparent 3px) 0 4px / 4px 17px no-repeat;
}
.tb + .tb {
  margin-left: 3px;
}
.tb.t1 {
  padding: 0 2px 0 6px;
}
.tb button {
  width: 23px;
  height: 23px;
}
.tb svg {
  width: 16px;
  height: 16px;
}
.tb .on svg {
  margin: 0 -1px;
}
.tb .on {
  border: 1px solid #0078d7;
  background: #f2f8fe;
}
.tb .arrow {
  width: 12px;
}
.tb .txt {
  width: auto;
  padding: 0 4px;
  font-size: 11px;
  white-space: nowrap;
}
.sep {
  width: 1px;
  height: 15px;
  margin: 0 3px;
  background: #c4c4c4;
}
.zoom {
  width: 49px;
  height: 22px;
  padding: 0 4px;
  font-size: 11px;
}
.page-no {
  width: 34px;
  height: 22px;
  padding: 0 3px;
  font-size: 11px;
}
.start-no {
  width: 30px;
  height: 23px;
  margin: 0 1px 0 4px;
  padding: 0 2px;
  border: 1px solid #555;
}
.content {
  display: grid;
  grid-template-columns: 184px minmax(0, 1fr);
  grid-template-rows: minmax(0, 1fr);
  column-gap: 10px;
  flex: 1;
  min-height: 0;
}
.outline {
  display: flex;
  flex-direction: column;
  padding-bottom: 2px;
}
.otabs {
  display: flex;
  align-items: flex-end;
  flex: 0 0 19px;
  padding-left: 2px;
}
.otabs button {
  width: 41px;
  height: 18px;
  border: 1px solid #d9d9d9;
  border-bottom: 0;
}
.otabs .active {
  width: 44px;
  height: 20px;
  padding-bottom: 3px;
  background: #fff;
}
.opage {
  flex: 1;
  padding: 1px 2px 2px;
  border: 1px solid #dcdcdc;
  background: #fff;
}
.opage .tree {
  height: 100%;
  padding: 0 0 0 14px;
  border: 1px solid #828790;
}
.opage label {
  display: flex;
  align-items: center;
  gap: 2px;
  white-space: nowrap;
}
.viewer {
  display: grid;
  grid-template-columns: 14px minmax(0, 1fr) 16px;
  grid-template-rows: 21px minmax(0, 1fr) 17px;
  min-height: 0;
}
.hruler {
  grid-area: 1 / 2;
  justify-self: center;
  margin-top: 3px;
  margin-left: 6px;
  background: #fff;
}
.vruler {
  grid-area: 2 / 1;
  height: 100%;
  background: #fff;
}
.hruler text,
.vruler text {
  text-anchor: middle;
  font: 10px 'Open Sans', sans-serif;
}
.doc {
  grid-area: 2 / 2;
  display: flex;
  justify-content: center;
  margin-left: 4px;
  padding-left: 2px;
  overflow: hidden;
  background: #a0a0a0;
}
.vscroll {
  grid-area: 2 / 3;
  display: flex;
  flex-direction: column;
  align-items: center;
}
.vscroll button {
  width: 16px;
  height: 17px;
}
.vscroll svg {
  width: 10px;
  height: 8px;
}
.thumb {
  width: 15px;
  height: 80px;
  margin: 18px 0 auto;
  background: #cdcdcd;
}
.hscroll {
  grid-area: 3 / 2;
  display: flex;
  justify-content: space-between;
  margin-left: 4px;
}
.hscroll button {
  width: 16px;
}
.hscroll svg {
  width: 8px;
  height: 10px;
}

/* printed page */
.page {
  flex: 0 0 795px;
  align-self: flex-start;
  min-height: 100%;
  padding: 10px 63px 20px;
  border: solid #000;
  border-width: 0 1px;
  background: #fff;
  box-shadow: 0 0 9px 1px rgba(0, 0, 0, .6);
  color: #000;
  font: 12px/16px Lato, sans-serif;
}
.page h4 {
  margin-top: 5px;
  font-size: 15px;
  line-height: 20px;
  font-weight: 700;
  text-decoration: underline;
  text-underline-offset: 2px;
}
.page h4.sys {
  margin-top: 7px;
}
.kv {
  display: grid;
  grid-template-columns: 136px 12px 166px;
  row-gap: 10px;
  margin-top: 6px;
}
.kv .val {
  text-align: right;
  white-space: nowrap;
}
.page .sub {
  margin-top: 8px;
}
.draw {
  display: block;
  margin-top: 18px;
}
.lt {
  fill: #abc1e8;
  stroke: #2c3440;
}
.fill-lt {
  fill: #abc1e8;
}
.dk {
  fill: #647a9f;
  stroke: #14181f;
}
.edge {
  fill: none;
  stroke: #2c3440;
}
.axis {
  fill: none;
  stroke: #566176;
}
.dash {
  fill: none;
  stroke: #555f70;
  stroke-dasharray: 4 2;
}
.dash.thin {
  stroke: #7584a3;
  stroke-dasharray: 2 1;
}
.dim {
  fill: none;
  stroke: #8c8c8c;
}
.num {
  fill: #222;
  text-anchor: middle;
}
.draw text {
  font-family: 'Open Sans', sans-serif;
  font-size: 9px;
}
.mark {
  fill: #e6edfb;
}
.draw .tag text,
.draw .legend text {
  font-size: 7px;
}
.legend {
  fill: #555;
}
.model {
  display: grid;
  grid-template-columns: 49px 11px 185px 1fr;
  margin-top: 17px;
}
.page h5 {
  margin: 7px 0 4px;
  font-size: 12px;
  font-weight: 700;
}
.page h5.q2 {
  margin-top: 8px;
}
table {
  width: 667px;
  table-layout: fixed;
  border: 1px solid #969696;
  border-collapse: collapse;
  line-height: 14px;
}
th, td {
  padding: 0 4px;
  border: solid #969696;
  border-width: 0 1px;
  font-weight: 400;
}
thead th {
  border-width: 1px;
  background: #99ccff;
  vertical-align: top;
}
tbody tr:first-child td {
  padding-top: 4px;
}
tfoot td {
  height: 19px;
  border-top-width: 1px;
}
.screws th {
  height: 21px;
  vertical-align: middle;
}
.screws :is(th, td) {
  text-align: center;
}
.screws :is(th, td):first-child {
  text-align: left;
}
.c-a { width: 203px; }
.c-b { width: 88px; }
.c-c { width: 82px; }
.c-d { width: 120px; }
.sections thead th {
  padding-top: 4px;
  padding-bottom: 1px;
}
.sections :is(th, td) {
  padding-right: 3px;
  text-align: right;
}
.sections :is(th, td):nth-child(-n + 2) {
  text-align: left;
}
.sections small {
  font-size: 9px;
}
.s-a { width: 105px; }
.s-b { width: 121px; }
.s-c { width: 72px; }
.s-d { width: 56px; }

/* bottom */
.status-in {
  display: flex;
  justify-content: flex-end;
  align-items: flex-end;
  flex: 0 0 25px;
  padding: 0 1px 4px;
  border-top: 1px solid #d5d5d5;
}
.status-in svg {
  width: 12px;
  height: 12px;
}
.bottom {
  display: flex;
  justify-content: space-between;
  flex: 0 0 24px;
  padding: 3px 3px 0 6px;
  background: #bacce4;
}
.btab {
  gap: 8px;
  padding: 0 10px 0 5px;
  border-radius: 4px 4px 0 0;
  background: linear-gradient(#fff, #eef5fd);
}
.btab svg {
  width: 15px;
  height: 15px;
}
.close svg {
  width: 8px;
  height: 8px;
  margin-bottom: 6px;
}
footer {
  flex: 0 0 22px;
  border-top: 1px solid #c4c2bf;
  background: #f3f2f0;
}
</style>
